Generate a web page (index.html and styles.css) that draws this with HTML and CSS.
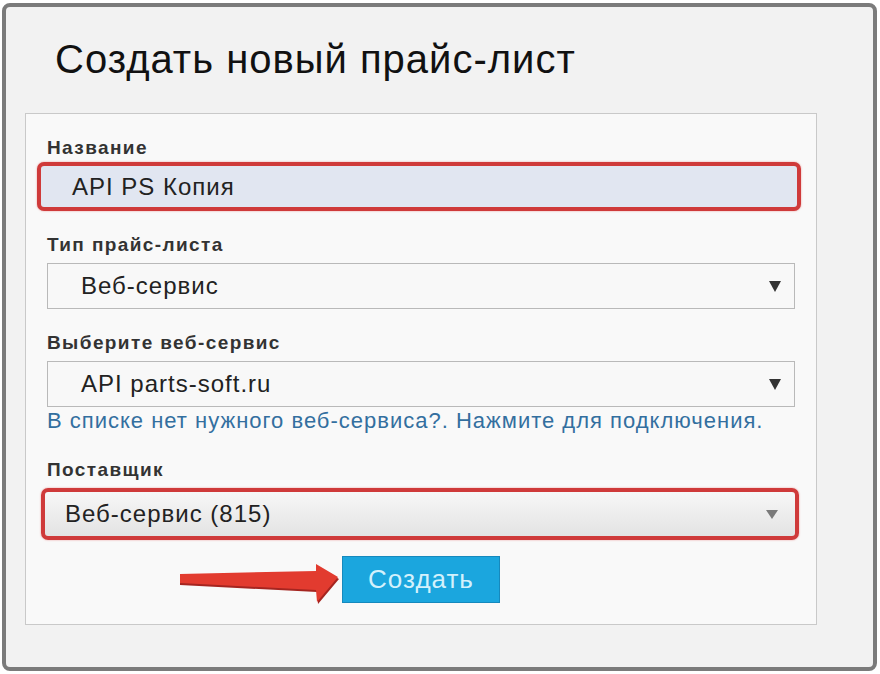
FILE: index.html
```html
<!DOCTYPE html>
<html lang="ru">
<head>
<meta charset="utf-8">
<link rel="stylesheet" href="styles.css">
</head>
<body>
<div class="frame">
  <h1 class="title">Создать новый прайс-лист</h1>
  <div class="panel">
    <div class="label l1">Название</div>
    <div class="hl hl-input">API PS Копия</div>

    <div class="label l2">Тип прайс-листа</div>
    <div class="select">
      <span>Веб-сервис</span>
      <svg class="caret" width="12" height="11" viewBox="0 0 12 11"><polygon points="0,0 12,0 6,11" fill="#333"/></svg>
    </div>

    <div class="label l3">Выберите веб-сервис</div>
    <div class="select">
      <span>API parts-soft.ru</span>
      <svg class="caret" width="12" height="11" viewBox="0 0 12 11"><polygon points="0,0 12,0 6,11" fill="#333"/></svg>
    </div>
    <div class="link">В списке нет нужного веб-сервиса?. Нажмите для подключения.</div>

    <div class="label l4">Поставщик</div>
    <div class="hl hl-select">
      <span>Веб-сервис (815)</span>
      <svg class="caret-sm" width="12" height="9" viewBox="0 0 12 9"><polygon points="0,0 12,0 6,9" fill="#7a7a7a"/></svg>
    </div>

    <div class="actions">
      <svg class="arrow" width="166" height="48" viewBox="0 0 166 48">
        <polygon points="4,18 140,15 140,8 163,21 142,46 141,34 4,27" fill="#a52520"/>
        <polygon points="4,16 140,13 140,6 162,19 141,44 140,32 4,25" fill="#e23b2f"/>
      </svg>
      <button class="btn">Создать</button>
    </div>
  </div>
</div>
</body>
</html>
```
FILE: styles.css
```css
html, body {
  margin: 0;
  padding: 0;
  background: #ffffff;
}
body {
  font-family: "Liberation Sans", Arial, sans-serif;
}
.frame {
  box-sizing: border-box;
  width: 875px;
  height: 668px;
  margin: 3px 0 0 2px;
  border: 4px solid #7b7b7b;
  border-radius: 8px;
  background: #f2f2f2;
  padding: 30px 0 0 19px;
}
.title {
  margin: 0 0 32px 30px;
  font-size: 40px;
  line-height: 44px;
  letter-spacing: 1px;
  font-weight: normal;
  color: #111111;
}
.panel {
  box-sizing: border-box;
  width: 792px;
  height: 512px;
  border: 1px solid #c9c9c9;
  background: #f9f9f9;
  padding: 23px 0 0 21px;
}
.label {
  font-size: 19px;
  line-height: 22px;
  letter-spacing: 1.4px;
  font-weight: bold;
  color: #333333;
}
.l2 { margin-top: 23px; }
.l3 { margin-top: 23px; }
.l4 { margin-top: 25px; }
.hl {
  box-sizing: border-box;
  border: 4px solid #cf3a3a;
  border-radius: 7px;
  box-shadow: 0 0 2px rgba(220, 80, 80, 0.6);
}
.hl-input {
  width: 764px;
  height: 49px;
  margin: 3px 0 0 -10px;
  background: #e1e6f1;
  padding-left: 31px;
  font-size: 24px;
  line-height: 41px;
  letter-spacing: 1px;
  color: #222222;
}
.select {
  box-sizing: border-box;
  width: 748px;
  height: 46px;
  margin-top: 7px;
  border: 1px solid #b9b9b9;
  background: #f8f8f8;
  padding: 0 13px 0 33px;
  display: flex;
  align-items: center;
  justify-content: space-between;
  font-size: 24px;
  letter-spacing: 1px;
  color: #222222;
}
.link {
  margin-top: 1px;
  font-size: 22px;
  line-height: 26px;
  letter-spacing: 1px;
  color: #336f9f;
}
.hl-select {
  width: 758px;
  height: 52px;
  margin: 7px 0 0 -6px;
  background: linear-gradient(#f7f7f7, #e3e3e3);
  padding: 0 17px 0 20px;
  display: flex;
  align-items: center;
  justify-content: space-between;
  font-size: 24px;
  letter-spacing: 1px;
  color: #222222;
}
.actions {
  display: flex;
  align-items: flex-start;
  margin-top: 16px;
}
.arrow {
  margin: 2px 0 0 129px;
}
.btn {
  box-sizing: border-box;
  width: 158px;
  height: 47px;
  border: 1px solid #1689bd;
  background: #1ba6de;
  color: #d3f1fc;
  font-family: "Liberation Sans", Arial, sans-serif;
  font-size: 26px;
  letter-spacing: 1px;
  padding: 0;
}
```
